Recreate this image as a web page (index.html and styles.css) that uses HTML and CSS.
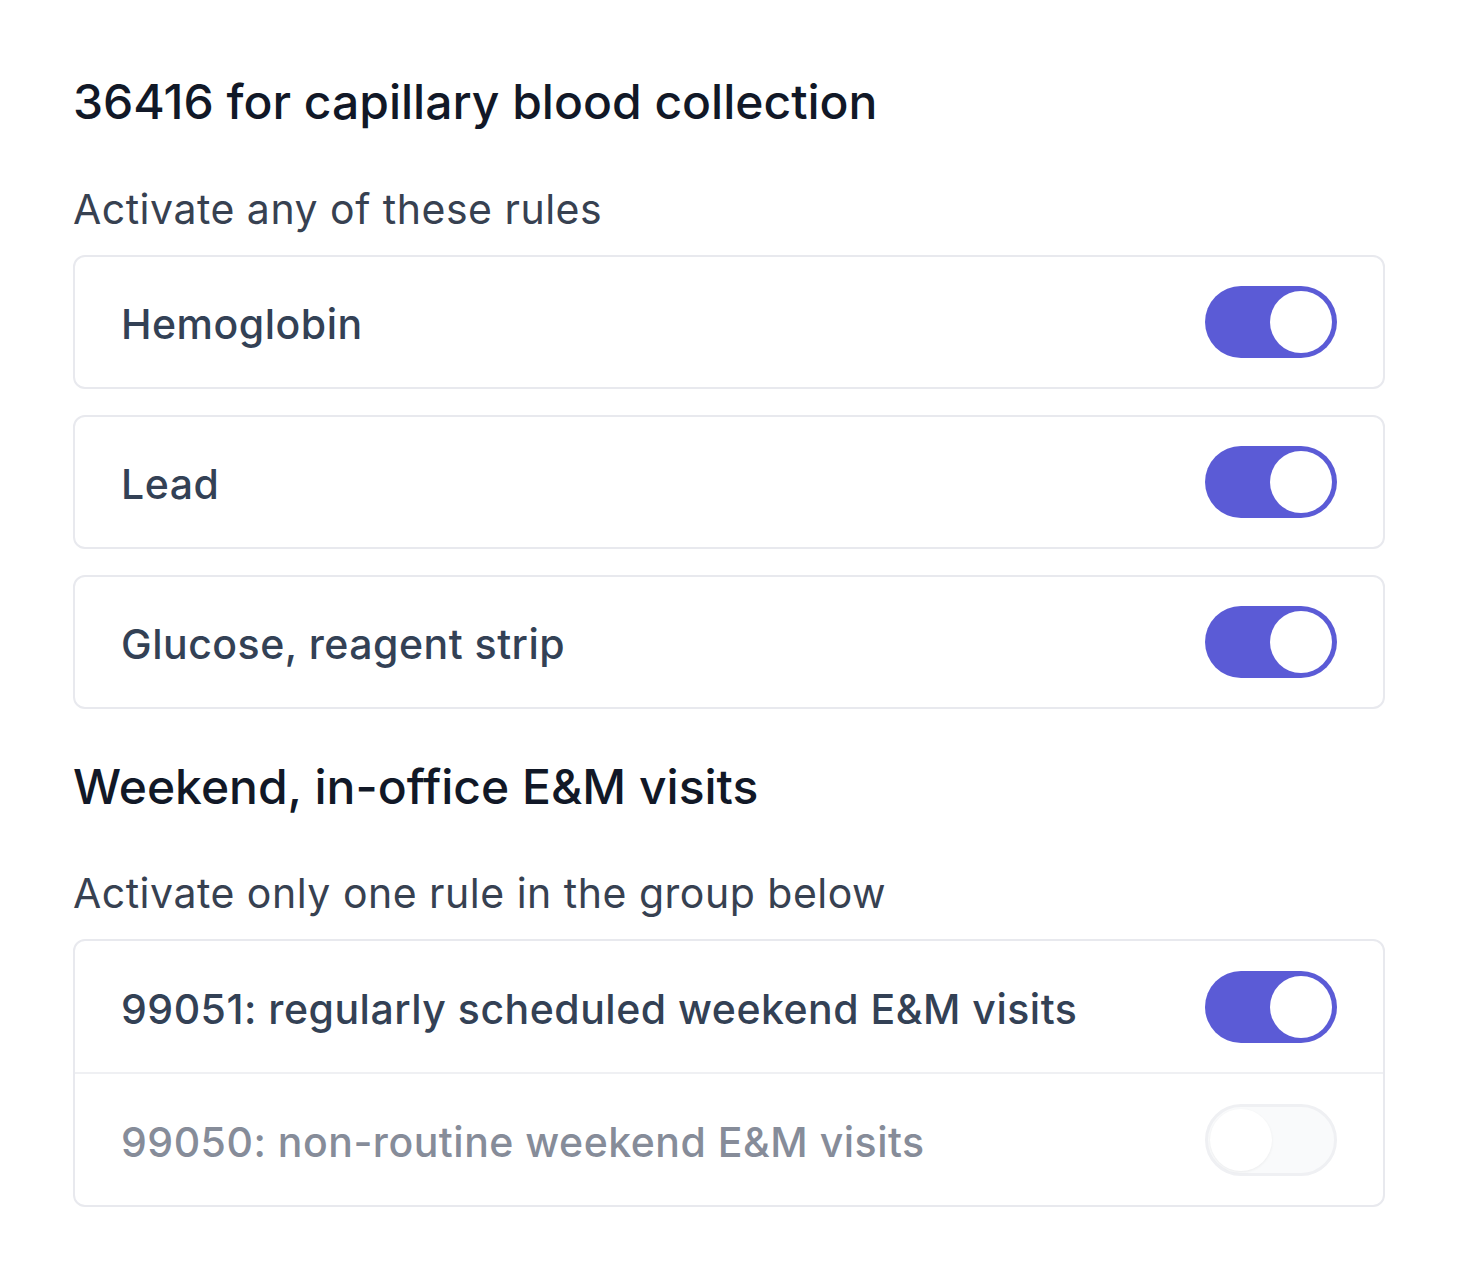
FILE: index.html
```html
<!DOCTYPE html>
<html lang="en">
<head>
    <meta charset="UTF-8">
    <meta name="viewport" content="width=device-width, initial-scale=1.0">
    <title>Rules</title>
    <link rel="stylesheet" href="styles.css">
</head>
<body>
    <section class="section">
        <h2 class="section-title">36416 for capillary blood collection</h2>
        <p class="section-hint">Activate any of these rules</p>
        <div class="rule-list">
            <div class="rule-card">
                <span class="rule-name">Hemoglobin</span>
                <span class="toggle on"><span class="knob"></span></span>
            </div>
            <div class="rule-card">
                <span class="rule-name">Lead</span>
                <span class="toggle on"><span class="knob"></span></span>
            </div>
            <div class="rule-card">
                <span class="rule-name">Glucose, reagent strip</span>
                <span class="toggle on"><span class="knob"></span></span>
            </div>
        </div>
    </section>

    <section class="section">
        <h2 class="section-title">Weekend, in-office E&amp;M visits</h2>
        <p class="section-hint">Activate only one rule in the group below</p>
        <div class="rule-group">
            <div class="rule-row">
                <span class="rule-name">99051: regularly scheduled weekend E&amp;M visits</span>
                <span class="toggle on"><span class="knob"></span></span>
            </div>
            <div class="rule-row disabled">
                <span class="rule-name">99050: non-routine weekend E&amp;M visits</span>
                <span class="toggle off"><span class="knob"></span></span>
            </div>
        </div>
    </section>
</body>
</html>
```

FILE: styles.css
```css
body {
    font-family: Inter, 'Noto Sans', 'Liberation Sans', sans-serif;
    margin: 0;
    padding: 73px 73px;
    background-color: white;
}
.section {
    margin-bottom: 49px;
}
.section-title {
    margin: 0;
    font-size: 48px;
    font-weight: 500;
    line-height: 1.2;
    color: #111827;
}
.section-hint {
    margin: 48px 0 16px;
    font-size: 41px;
    font-weight: 400;
    line-height: 60px;
    letter-spacing: 0.5px;
    color: #374151;
}
.rule-list {
    display: flex;
    flex-direction: column;
    gap: 26px;
}
.rule-card,
.rule-group {
    border: 2px solid #e8e9ee;
    border-radius: 12px;
}
.rule-card,
.rule-row {
    display: flex;
    align-items: center;
    justify-content: space-between;
    padding: 29px 46px;
}
.rule-row {
    padding: 30px 46px 29px;
}
.rule-row + .rule-row {
    border-top: 2px solid #eff0f3;
}
.rule-name {
    padding-top: 4px;
    font-size: 41px;
    font-weight: 500;
    letter-spacing: 0.5px;
    color: #334155;
}
.rule-row.disabled .rule-name {
    color: #868c99;
}
.toggle {
    box-sizing: border-box;
    display: flex;
    align-items: center;
    width: 132px;
    height: 72px;
    padding: 5px;
    border-radius: 36px;
}
.toggle .knob {
    width: 62px;
    height: 62px;
    border-radius: 50%;
    background-color: white;
}
.toggle.on {
    background-color: #5b5bd6;
    justify-content: flex-end;
}
.toggle.off {
    background-color: #f9fafb;
    border: 3px solid #eff0f3;
    padding: 2px;
    justify-content: flex-start;
}
.toggle.off .knob {
    box-shadow: 0 1px 3px rgba(0,0,0,0.06);
}
```
